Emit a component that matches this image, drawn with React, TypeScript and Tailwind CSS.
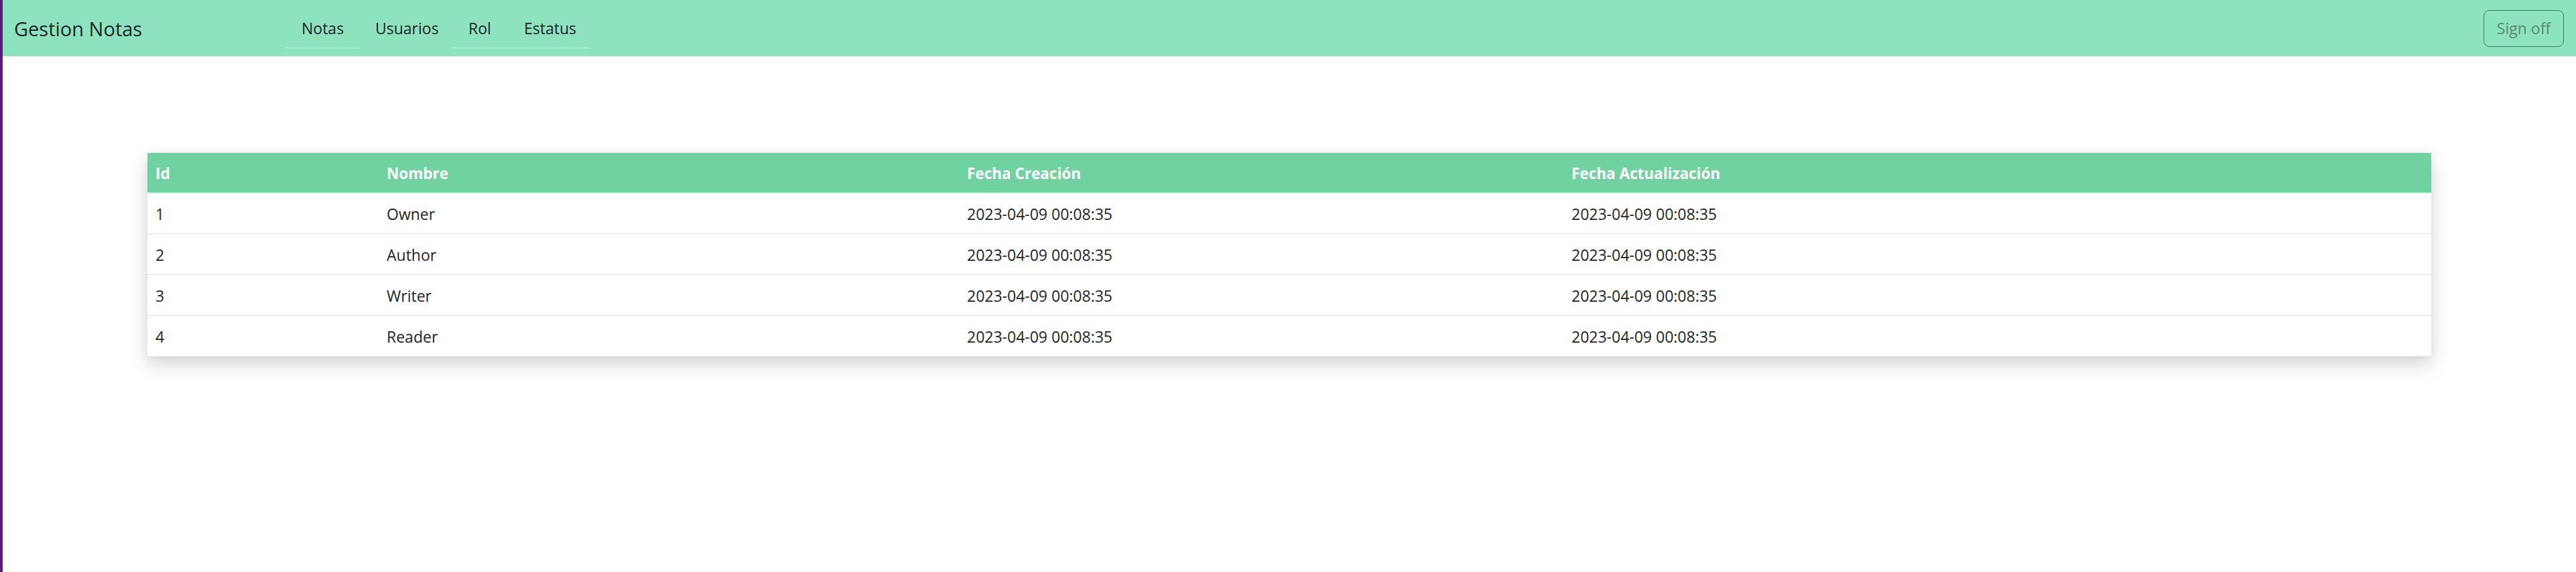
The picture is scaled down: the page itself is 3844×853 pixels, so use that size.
import React from "react";

const rows = [
  { id: 1, nombre: "Owner" },
  { id: 2, nombre: "Author" },
  { id: 3, nombre: "Writer" },
  { id: 4, nombre: "Reader" },
];

const fecha = "2023-04-09 00:08:35";

export default function App() {
  return (
    <div className="min-h-screen border-l-4 border-[#5a1a78] bg-white font-['Open_Sans',sans-serif] text-[#212529]">
      <nav className="flex h-[84px] items-center bg-[#8ce3be] pl-[17px] pr-[18px]">
        <span className="w-[405px] text-[29px] leading-[45px] text-[#212529]">Gestion Notas</span>
        <ul className="flex items-center">
          <li>
            <a className="block w-[110px] border-b border-[#dde6e2] pl-[24px] pt-[12px] pb-[11px] text-[23px] leading-[36px] text-[#212529]">
              Notas
            </a>
          </li>
          <li>
            <a className="block w-[139px] border-b border-transparent pl-[24px] pt-[12px] pb-[11px] text-[23px] leading-[36px] text-[#212529]">
              Usuarios
            </a>
          </li>
          <li>
            <a className="block w-[83px] border-b border-[#dde6e2] pl-[24px] pt-[12px] pb-[11px] text-[23px] leading-[36px] text-[#212529]">
              Rol
            </a>
          </li>
          <li>
            <a className="block w-[121px] border-b border-[#dde6e2] pl-[24px] pt-[12px] pb-[11px] text-[23px] leading-[36px] text-[#212529]">
              Estatus
            </a>
          </li>
        </ul>
        <button className="ml-auto h-[55px] w-[120px] rounded-[9px] border border-[#3f7f57] text-[23px] leading-[36px] text-[#5b8b6b]">
          Sign off
        </button>
      </nav>
      <main className="px-[216px] pt-[144px]">
        <div className="bg-white shadow-[0_12px_28px_rgba(0,0,0,0.16),0_0_14px_rgba(0,0,0,0.05)]">
          <div className="grid h-[60px] grid-cols-[345px_866px_902px_1fr] items-center border-b border-[#dee2e6] bg-[#70d2a0] text-[22.5px] font-bold leading-[36px] text-white">
            <div className="px-[12px] pt-[2px]">Id</div>
            <div className="px-[12px] pt-[2px]">Nombre</div>
            <div className="px-[12px] pt-[2px]">Fecha Creación</div>
            <div className="px-[12px] pt-[2px]">Fecha Actualización</div>
          </div>
          {rows.map((r) => (
            <div
              key={r.id}
              className="grid h-[61px] grid-cols-[345px_866px_902px_1fr] items-center border-b border-[#dee2e6] text-[23px] leading-[36px] text-[#212529]"
            >
              <div className="px-[12px] pt-[2px]">{r.id}</div>
              <div className="px-[12px] pt-[2px]">{r.nombre}</div>
              <div className="px-[12px] pt-[2px]">{fecha}</div>
              <div className="px-[12px] pt-[2px]">{fecha}</div>
            </div>
          ))}
        </div>
      </main>
    </div>
  );
}
